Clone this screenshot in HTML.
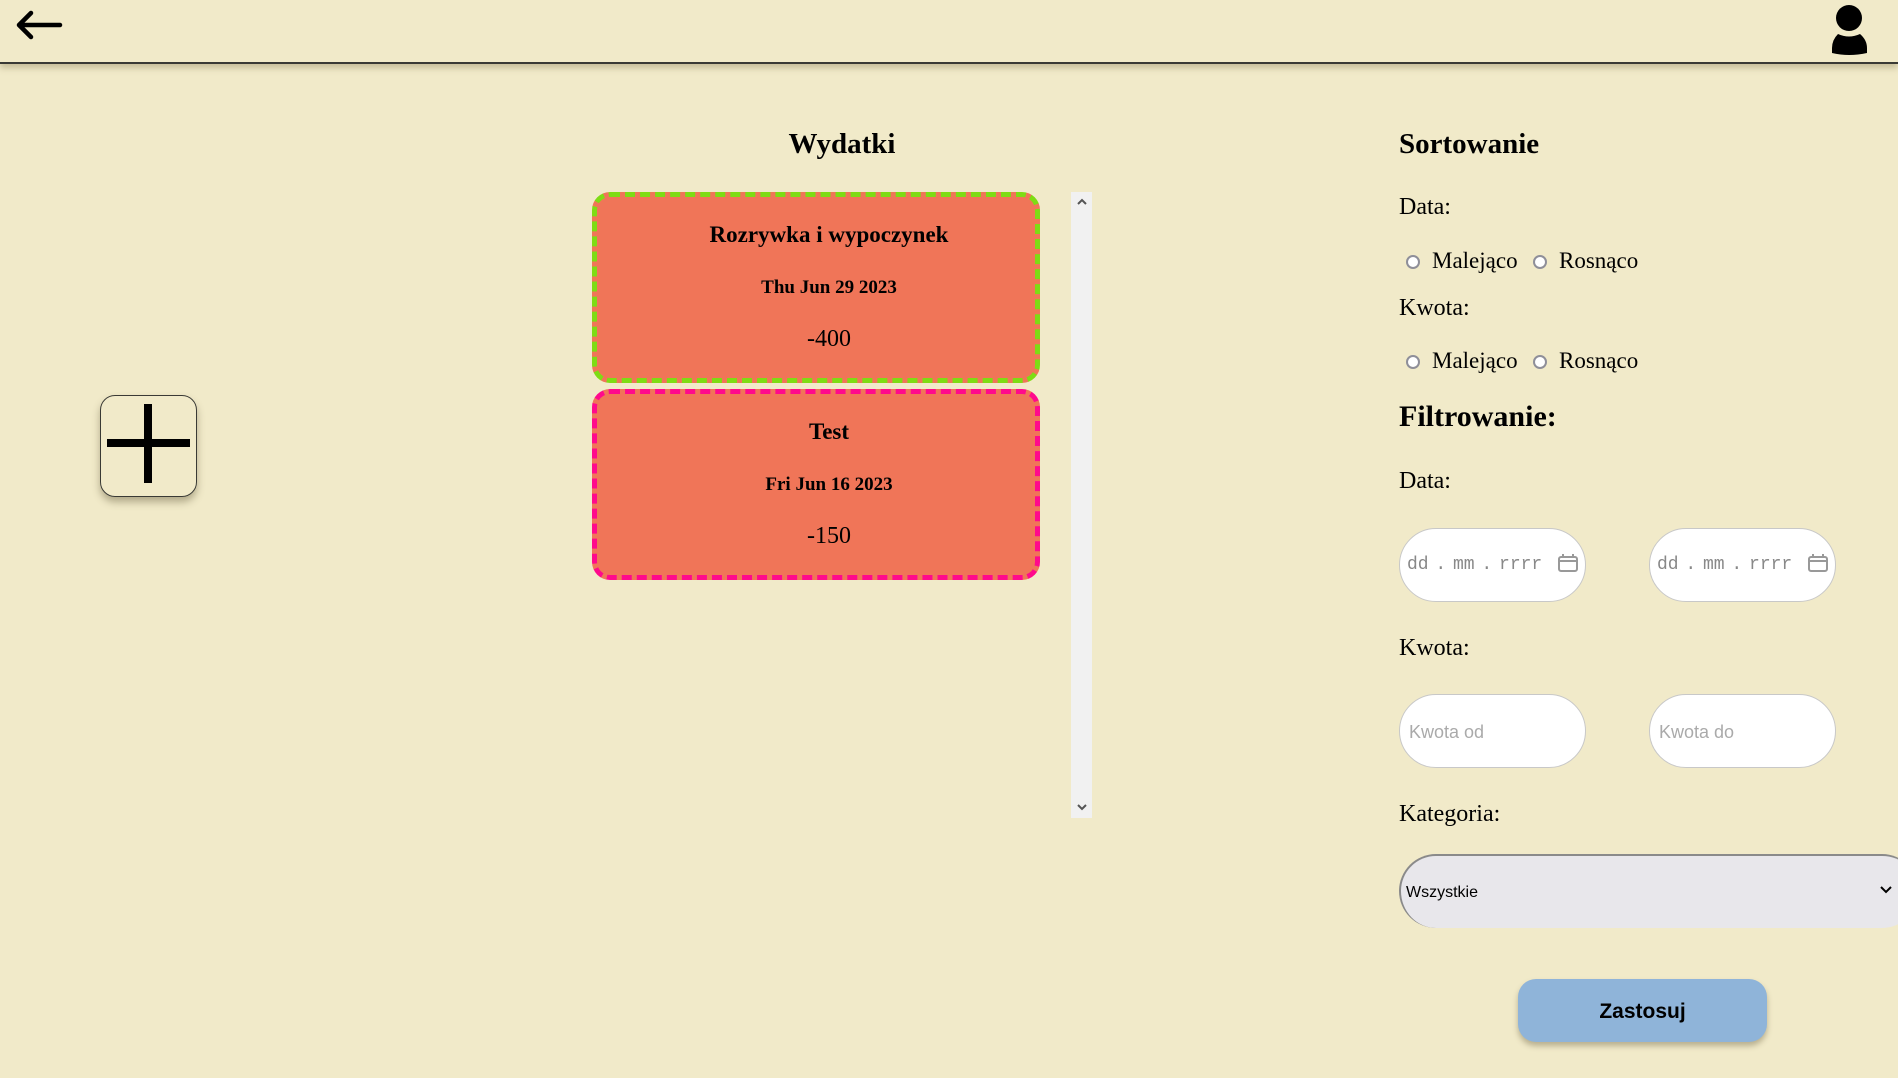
<!DOCTYPE html>
<html><head><meta charset="utf-8"><style>
*{margin:0;padding:0;box-sizing:border-box}
body{width:1898px;height:1078px;background:#f1eac9;font-family:"Liberation Serif",serif;position:relative;overflow:hidden;color:#000}
.a{position:absolute;white-space:nowrap}
.hdr{position:absolute;left:0;top:0;width:1898px;height:64px;border-bottom:2px solid #3a3a35;box-shadow:0 4px 6px rgba(120,110,70,.35)}
.card{position:absolute;left:592px;width:448px;background:#f07558;border:5px dashed;border-radius:18px}
.card div{position:absolute;width:100%;text-align:center;left:13px;font-weight:bold}
.radio{position:absolute;width:14px;height:14px;border:2px solid #8f8f99;border-radius:50%;background:#fff}
.lbl{position:absolute;font-size:24px}
.in{position:absolute;width:187px;height:74px;background:#fff;border:1px solid #c8c8c8;border-radius:37px;font-family:"Liberation Mono",monospace;color:#888;font-size:18px}
</style></head><body>
<div class="hdr"></div>
<svg class="a" style="left:14px;top:10px" width="50" height="32"><path d="M46 15H6M17 3L5 15L17 27" stroke="#000" stroke-width="4.5" fill="none" stroke-linecap="round" stroke-linejoin="round"/></svg>
<svg class="a" style="left:1828px;top:2px" width="42" height="56"><circle cx="21" cy="16" r="13"/><path d="M10 32Q21 37 32 32Q39 38 39 46V51Q21 55 4 51V46Q4 38 10 32Z"/></svg>

<div class="a" style="left:100px;top:395px;width:97px;height:102px;border:1.5px solid #3a3a35;border-radius:15px;box-shadow:0 5px 8px rgba(100,90,60,.45)"></div>
<div class="a" style="left:107px;top:439px;width:83px;height:8px;background:#000"></div>
<div class="a" style="left:144px;top:404px;width:8px;height:79px;background:#000"></div>

<div class="a" style="left:742px;top:128px;width:200px;text-align:center;font-size:29px;font-weight:bold">Wydatki</div>

<div class="card" style="top:192px;height:191px;border-color:#7edc14">
<div style="top:25px;font-size:23px">Rozrywka i wypoczynek</div>
<div style="top:80px;font-size:19px">Thu Jun 29 2023</div>
<div style="top:129px;font-size:24px;font-weight:normal">-400</div></div>
<div class="card" style="top:389px;height:191px;border-color:#ff0a8c">
<div style="top:25px;font-size:23px">Test</div>
<div style="top:80px;font-size:19px">Fri Jun 16 2023</div>
<div style="top:129px;font-size:24px;font-weight:normal">-150</div></div>

<div class="a" style="left:1071px;top:192px;width:21px;height:626px;background:#f1f1f1"></div>
<svg class="a" style="left:1076px;top:196px" width="12" height="12"><path d="M2 8L6 4L10 8" stroke="#555" stroke-width="2" fill="none"/></svg>
<svg class="a" style="left:1076px;top:801px" width="12" height="12"><path d="M2 4L6 8L10 4" stroke="#555" stroke-width="2" fill="none"/></svg>

<div class="a" style="left:1399px;top:128px;font-size:29px;font-weight:bold">Sortowanie</div>
<div class="lbl" style="left:1399px;top:194px">Data:</div>
<div class="radio" style="left:1406px;top:255px"></div><div class="lbl" style="left:1432px;top:248px;font-size:23px">Malejąco</div>
<div class="radio" style="left:1533px;top:255px"></div><div class="lbl" style="left:1559px;top:248px;font-size:23px">Rosnąco</div>
<div class="lbl" style="left:1399px;top:295px">Kwota:</div>
<div class="radio" style="left:1406px;top:355px"></div><div class="lbl" style="left:1432px;top:348px;font-size:23px">Malejąco</div>
<div class="radio" style="left:1533px;top:355px"></div><div class="lbl" style="left:1559px;top:348px;font-size:23px">Rosnąco</div>
<div class="a" style="left:1399px;top:400px;font-size:30px;font-weight:bold">Filtrowanie:</div>
<div class="lbl" style="left:1399px;top:468px">Data:</div>
<div class="in" style="left:1399px;top:528px"><span class="a" style="left:7px;top:26px;word-spacing:-4px">dd . mm . rrrr</span><svg class="a" style="left:157px;top:24px" width="22" height="20"><rect x="2" y="4" width="18" height="14" rx="2" fill="none" stroke="#999" stroke-width="2"/><path d="M2 8H20M6 1V5M16 1V5" stroke="#999" stroke-width="2"/></svg></div>
<div class="in" style="left:1649px;top:528px"><span class="a" style="left:7px;top:26px;word-spacing:-4px">dd . mm . rrrr</span><svg class="a" style="left:157px;top:24px" width="22" height="20"><rect x="2" y="4" width="18" height="14" rx="2" fill="none" stroke="#999" stroke-width="2"/><path d="M2 8H20M6 1V5M16 1V5" stroke="#999" stroke-width="2"/></svg></div>
<div class="lbl" style="left:1399px;top:635px">Kwota:</div>
<div class="in" style="left:1399px;top:694px;font-family:'Liberation Sans',sans-serif;color:#aaa"><span class="a" style="left:9px;top:27px">Kwota od</span></div>
<div class="in" style="left:1649px;top:694px;font-family:'Liberation Sans',sans-serif;color:#aaa"><span class="a" style="left:9px;top:27px">Kwota do</span></div>
<div class="lbl" style="left:1399px;top:801px">Kategoria:</div>
<div class="a" style="left:1399px;top:854px;width:520px;height:74px;background:#e8e7eb;border-top:2px solid #8a8a8a;border-left:2px solid #8a8a8a;border-radius:37px;font-family:'Liberation Sans',sans-serif;font-size:16px"><span class="a" style="left:5px;top:28px">Wszystkie</span></div>
<svg class="a" style="left:1879px;top:884px" width="14" height="12"><path d="M2 3L7 8L12 3" stroke="#000" stroke-width="2" fill="none"/></svg>
<div class="a" style="left:1518px;top:979px;width:249px;height:63px;background:#8fb4d9;border-radius:18px;box-shadow:0 4px 6px rgba(100,90,60,.4);text-align:center;line-height:65px;font-family:'Liberation Sans',sans-serif;font-weight:bold;font-size:21px">Zastosuj</div>
</body></html>
